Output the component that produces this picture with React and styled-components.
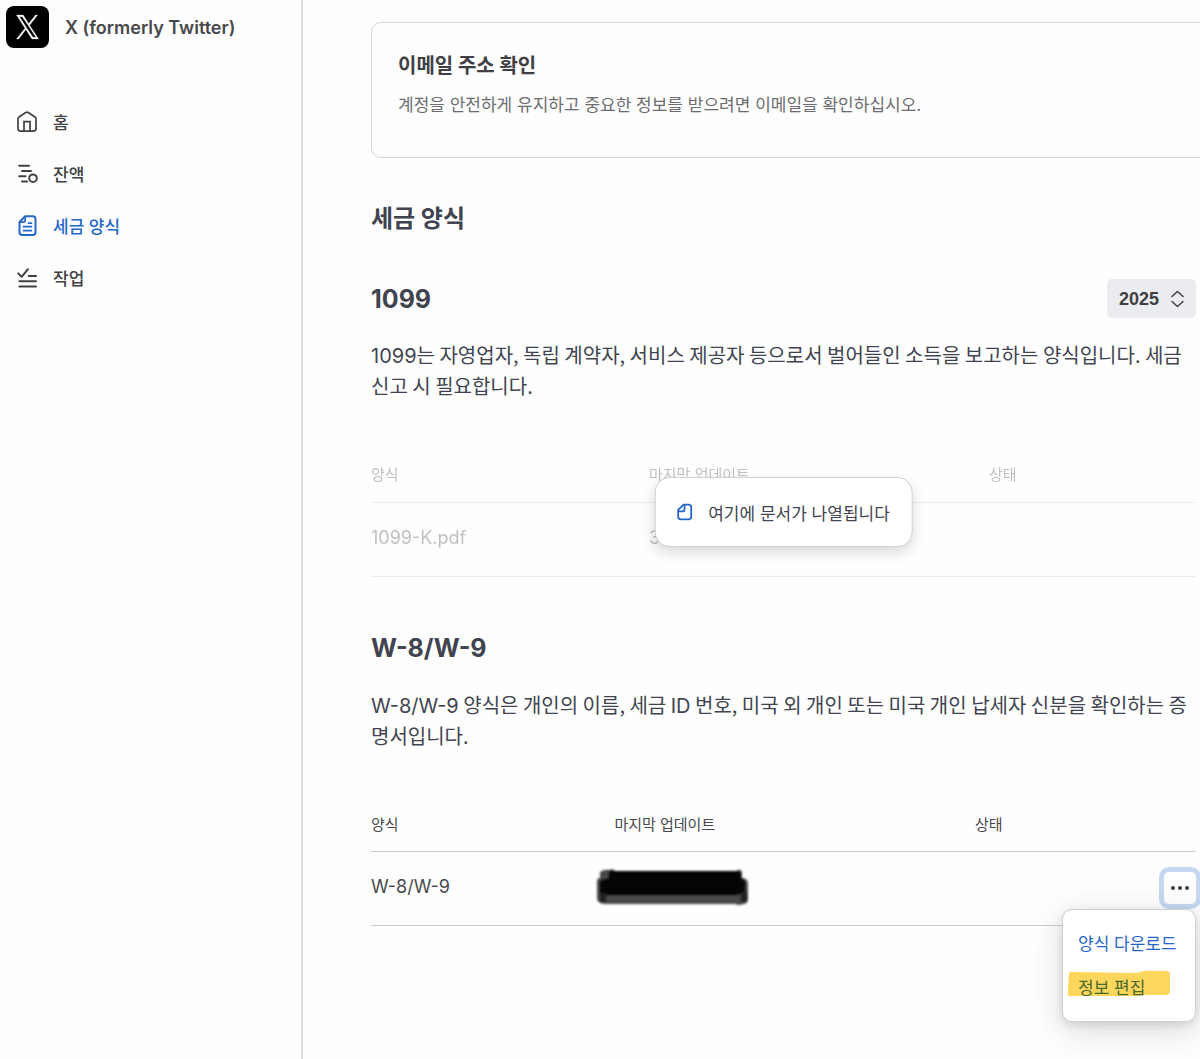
import React from 'react';
import styled, { createGlobalStyle } from 'styled-components';

const GlobalStyle = createGlobalStyle`
  * {
    box-sizing: border-box;
  }

  body {
    margin: 0;
    background: #fefefe;
    color: #414450;
    font-family: Inter, 'Noto Sans CJK KR', sans-serif;
  }
`;

const Layout = styled.div`
  display: flex;
  min-height: 100vh;
  overflow: hidden;
`;

const Sidebar = styled.aside`
  flex: 0 0 303px;
  padding: 6px;
  border-right: 2px solid #dcdcde;
`;

const Brand = styled.div`
  display: flex;
  align-items: center;
  gap: 16px;
  height: 42px;
  color: #48484c;
  font-size: 18px;
  font-weight: 600;
`;

const Nav = styled.nav`
  display: flex;
  flex-direction: column;
  margin-top: 47px;
`;

const NavLink = styled.a`
  display: flex;
  align-items: center;
  gap: 15px;
  height: 52px;
  padding-left: 10px;
  color: ${props => (props.$active ? '#2567c9' : '#404044')};
  font-size: 17px;
  font-weight: 500;
  text-decoration: none;
`;

const Main = styled.main`
  flex: 1;
  min-width: 0;
  padding: 22px 4px 40px 68px;
`;

const Notice = styled.section`
  height: 136px;
  margin-right: -24px;
  padding: 28px 26px;
  border: 1px solid #d5d5d8;
  border-radius: 10px;
`;

const NoticeTitle = styled.h2`
  margin: 0;
  color: #404044;
  font-size: 20px;
  font-weight: 700;
  line-height: 30px;
`;

const NoticeText = styled.p`
  margin: 10px 0 0;
  color: #6c6c70;
  font-size: 17px;
  line-height: 28px;
`;

const PageTitle = styled.h1`
  margin: 42px 0;
  color: #414450;
  font-size: 24px;
  font-weight: 700;
  line-height: 37px;
`;

const Section = styled.section`
  margin-bottom: 52px;
`;

const SectionHeader = styled.div`
  display: flex;
  align-items: center;
  justify-content: space-between;
  height: 39px;
`;

const SectionTitle = styled.h2`
  margin: 0;
  color: #414450;
  font-size: 25px;
  font-weight: 700;
`;

const Description = styled.p`
  margin: 21px 0 47px;
  color: #414450;
  font-family: 'Noto Sans CJK KR', sans-serif;
  font-size: 20px;
  line-height: 31px;
`;

const Latin = styled.span`
  font-family: Inter, sans-serif;
  line-height: 1;
`;

const YearPicker = styled.div`
  position: relative;

  svg {
    position: absolute;
    top: 11px;
    right: 12px;
    pointer-events: none;
  }
`;

const YearSelect = styled.select`
  appearance: none;
  width: 89px;
  height: 39px;
  padding: 0 12px;
  border: 0;
  border-radius: 5px;
  background: #ebecf0;
  color: #404044;
  font-family: 'Liberation Sans', sans-serif;
  font-size: 18px;
  font-weight: 700;
`;

const TableWrap = styled.div`
  position: relative;
`;

const Table = styled.table`
  width: 100%;
  table-layout: fixed;
  border-collapse: collapse;
  opacity: ${props => (props.$faded ? 0.34 : 1)};
`;

const HeadCell = styled.th`
  width: ${props => props.$width || 'auto'};
  height: 54px;
  padding: 0 0 2px;
  border-bottom: 1px solid #ccccd0;
  color: #48484c;
  font-size: 15px;
  font-weight: 400;
  text-align: left;
`;

const Cell = styled.td`
  height: 74px;
  padding: 0 0 ${props => (props.$end ? '2px' : '4px')};
  border-bottom: 1px solid #ccccd0;
  color: #48484c;
  font-size: 18px;
  text-align: ${props => (props.$end ? 'right' : 'left')};
`;

const EmptyHint = styled.div`
  position: absolute;
  top: 50%;
  left: 50%;
  display: flex;
  align-items: center;
  gap: 15px;
  height: 70px;
  padding: 0 22px 0 20px;
  border: 1px solid #cfcfd3;
  border-radius: 15px;
  background: #fff;
  box-shadow: 0 6px 14px rgba(0, 0, 0, 0.14);
  color: #414450;
  font-size: 17px;
  white-space: nowrap;
  transform: translate(-50%, -50%);

  svg {
    color: #2567c9;
  }
`;

const Redaction = styled.svg`
  display: block;
  margin-left: -18px;
  filter: blur(1px);
`;

const Actions = styled.div`
  position: relative;
  display: inline-block;
  vertical-align: middle;
`;

const MoreButton = styled.button`
  display: flex;
  align-items: center;
  justify-content: center;
  width: 32px;
  height: 32px;
  padding: 0;
  border: 0;
  border-radius: 5px;
  background: #fff;
  box-shadow: 0 0 0 5px #c5d8ef;
  color: #404044;
`;

const Menu = styled.div`
  position: absolute;
  top: 37px;
  right: 0;
  display: flex;
  flex-direction: column;
  width: 134px;
  padding: 11px 0 12px;
  border: 1px solid #d0d0d4;
  border-radius: 10px;
  background: #fff;
  box-shadow: 0 8px 32px rgba(50, 50, 80, 0.18), 0 3px 8px rgba(0, 0, 0, 0.1);
`;

const MenuItem = styled.button`
  position: relative;
  height: 44px;
  padding: 0 15px;
  border: 0;
  background: none;
  color: ${props => (props.$marked ? '#46692c' : '#2567c9')};
  font-family: inherit;
  font-size: 17px;
  text-align: left;
  white-space: nowrap;
`;

const Marker = styled.svg`
  position: absolute;
  top: 5px;
  left: 4px;
`;

const MenuLabel = styled.span`
  position: relative;
`;

const Icon = ({ size = 22, children }) => (
  <svg
    width={size}
    height={size}
    viewBox="0 0 22 22"
    fill="none"
    stroke="currentColor"
    strokeWidth="2"
    strokeLinecap="round"
    strokeLinejoin="round"
    aria-hidden="true"
  >
    {children}
  </svg>
);

const Logo = () => (
  <svg width="43" height="42" viewBox="0 0 43 42" aria-hidden="true">
    <rect width="43" height="42" rx="8" fill="#000" />
    <g transform="translate(10 9)" fill="#fff" stroke="#fff" strokeWidth="0.3">
      <path d="M13.6 10.2 21.6 0h-2.1l-6.8 8.8L7.2 0H.5l8.5 13.2L.5 24h2.1l7.3-9.5 6 9.5h6.7L13.6 10.2Zm-2.6 3.2-.9-1.3L3.4 1.7h2.9l5.6 8.3.9 1.3 7.2 11H17l-6-8.9Z" />
    </g>
  </svg>
);

const HomeIcon = () => (
  <Icon>
    <path d="M2 8.9Q2 7.7 3 7L9.8 2.5Q11 1.7 12.2 2.5L19 7Q20 7.7 20 8.9V18.6Q20 21.1 17.4 21.1H4.6Q2 21.1 2 18.6Z" strokeWidth="1.7" />
    <path d="M8 20.8V11.7H14V20.8" strokeWidth="1.7" strokeLinejoin="miter" />
  </Icon>
);

const BalanceIcon = () => (
  <Icon>
    <path d="M3.2 3.8H13M6 9H15M3.2 14.2H9.5M6 19.6H11" />
    <circle cx="17" cy="16.2" r="3.8" />
  </Icon>
);

const FormIcon = () => (
  <Icon>
    <path d="M9.2 2.2H16.7Q19.5 2.2 19.5 5V18.2Q19.5 21 16.7 21H6.3Q3.5 21 3.5 18.2V8Z" />
    <path d="M9.2 2.7V6.1Q9.2 8.1 7.2 8.1H4M12.5 9.2H15.5M7.5 12.7H15.5M7.5 16.7H15.5" strokeWidth="1.7" />
  </Icon>
);

const TaskIcon = () => (
  <Icon>
    <path d="M2.2 7.4 5.6 10.8 12 3.2M12.8 9.9H20M3.4 15.2H20M3.4 20.5H20" />
  </Icon>
);

const DocumentIcon = () => (
  <Icon size={18}>
    <path d="M9.5 2H15.5Q19 2 19 5.5V16.5Q19 20 15.5 20H6.5Q3 20 3 16.5V8.5Z" strokeWidth="2.2" />
    <path d="M10.8 2.5V7.5Q10.8 10.3 8 10.3H3.5" strokeWidth="2.2" />
  </Icon>
);

const navItems = [
  { label: '홈', icon: HomeIcon },
  { label: '잔액', icon: BalanceIcon },
  { label: '세금 양식', icon: FormIcon, active: true },
  { label: '작업', icon: TaskIcon },
];

const App = () => (
  <>
    <GlobalStyle />
    <Layout>
      <Sidebar>
        <Brand>
          <Logo />
          <span>X (formerly Twitter)</span>
        </Brand>
        <Nav>
          {navItems.map(({ label, icon: ItemIcon, active }) => (
            <NavLink key={label} href="#" $active={active}>
              <ItemIcon />
              {label}
            </NavLink>
          ))}
        </Nav>
      </Sidebar>

      <Main>
        <Notice>
          <NoticeTitle>이메일 주소 확인</NoticeTitle>
          <NoticeText>계정을 안전하게 유지하고 중요한 정보를 받으려면 이메일을 확인하십시오.</NoticeText>
        </Notice>

        <PageTitle>세금 양식</PageTitle>

        <Section>
          <SectionHeader>
            <SectionTitle id="form-1099">1099</SectionTitle>
            <YearPicker>
              <YearSelect aria-labelledby="form-1099" defaultValue="2025">
                <option>2025</option>
              </YearSelect>
              <svg width="13" height="18" viewBox="0 0 13 18" fill="none" stroke="#404044" strokeWidth="1.5" strokeLinecap="round" strokeLinejoin="round">
                <path d="M1 6.5 6.5 1.5 12 6.5M1 11.5 6.5 16.5 12 11.5" />
              </svg>
            </YearPicker>
          </SectionHeader>
          <Description>
            <Latin>1099</Latin>는 자영업자, 독립 계약자, 서비스 제공자 등으로서 벌어들인 소득을 보고하는 양식입니다. 세금 신고 시 필요합니다.
          </Description>
          <TableWrap>
            <Table $faded>
              <thead>
                <tr>
                  <HeadCell $width="33.7%">양식</HeadCell>
                  <HeadCell $width="41.2%">마지막 업데이트</HeadCell>
                  <HeadCell>상태</HeadCell>
                </tr>
              </thead>
              <tbody>
                <tr>
                  <Cell>1099-K.pdf</Cell>
                  <Cell>3</Cell>
                  <Cell />
                </tr>
              </tbody>
            </Table>
            <EmptyHint>
              <DocumentIcon />
              여기에 문서가 나열됩니다
            </EmptyHint>
          </TableWrap>
        </Section>

        <Section>
          <SectionHeader>
            <SectionTitle>W-8/W-9</SectionTitle>
          </SectionHeader>
          <Description>
            <Latin>W-8/W-9</Latin> 양식은 개인의 이름, 세금 <Latin>ID</Latin> 번호, 미국 외 개인 또는 미국 개인 납세자 신분을 확인하는 증명서입니다.
          </Description>
          <Table>
            <thead>
              <tr>
                <HeadCell $width="29.5%">양식</HeadCell>
                <HeadCell $width="43.7%">마지막 업데이트</HeadCell>
                <HeadCell>상태</HeadCell>
                <HeadCell $width="40px" aria-label="작업" />
              </tr>
            </thead>
            <tbody>
              <tr>
                <Cell>W-8/W-9</Cell>
                <Cell>
                  <Redaction width="153" height="38" viewBox="0 0 153 38" aria-hidden="true">
                    <path d="M4 4Q8 1 14 2Q17 0 19 3H140Q145 0 146 4V10Q152 10 152 16V31Q152 36 147 36Q143 38 139 36H10Q2 36 1 31V13Q1 10 4 10Z" fill="#484848" />
                    <path d="M13 4Q15 1 18 3H142Q145 3 145 10L149 13V24Q145 27 138 27H4V13L13 10Z" fill="#050505" />
                    <path d="M4 25H10V34H4ZM145 24H151V34H145Z" fill="#222" />
                  </Redaction>
                </Cell>
                <Cell />
                <Cell $end>
                  <Actions>
                    <MoreButton aria-label="작업" aria-expanded="true">
                      <svg width="20" height="6" viewBox="0 0 20 6" fill="currentColor">
                        <circle cx="3" cy="3" r="2" />
                        <circle cx="10" cy="3" r="2" />
                        <circle cx="17" cy="3" r="2" />
                      </svg>
                    </MoreButton>
                    <Menu>
                      <MenuItem>양식 다운로드</MenuItem>
                      <MenuItem $marked>
                        <Marker width="104" height="28" viewBox="0 0 104 28" aria-hidden="true">
                          <path d="M2 3Q3 1 8 2L70 3Q78 0 86 1H99Q103 1 103 5V21Q103 25 98 25H78L70 26H3Q0 26 1 21Z" fill="#ffd65c" />
                        </Marker>
                        <MenuLabel>정보 편집</MenuLabel>
                      </MenuItem>
                    </Menu>
                  </Actions>
                </Cell>
              </tr>
            </tbody>
          </Table>
        </Section>
      </Main>
    </Layout>
  </>
);

export default App;
